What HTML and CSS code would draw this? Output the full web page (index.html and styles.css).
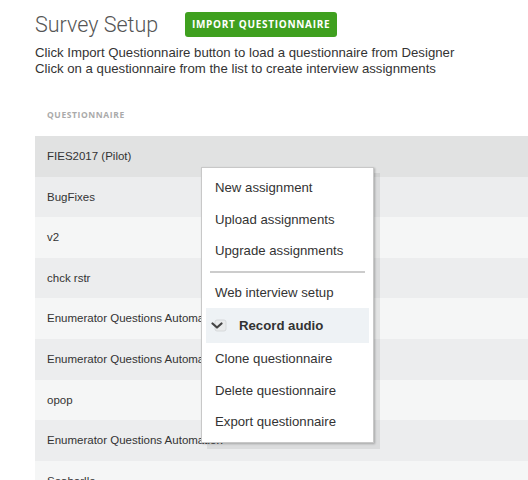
FILE: index.html
```html
<!DOCTYPE html>
<html>
<head>
<meta charset="utf-8">
<link rel="stylesheet" href="styles.css">
</head>
<body>
<div class="page">
  <div class="title-row">
    <h1 class="title">Survey Setup</h1>
    <button class="btn-import">IMPORT QUESTIONNAIRE</button>
  </div>
  <p class="desc">Click Import Questionnaire button to load a questionnaire from Designer<br>Click on a questionnaire from the list to create interview assignments</p>
  <div class="table">
    <div class="thead">QUESTIONNAIRE</div>
    <div class="row hover">FIES2017 (Pilot)</div>
    <div class="row">BugFixes</div>
    <div class="row">v2</div>
    <div class="row">chck rstr</div>
    <div class="row">Enumerator Questions Automation</div>
    <div class="row">Enumerator Questions Automation</div>
    <div class="row">opop</div>
    <div class="row">Enumerator Questions Automation</div>
    <div class="row">Seaborlle</div>
  </div>
  <ul class="menu">
    <li class="item">New assignment</li>
    <li class="item">Upload assignments</li>
    <li class="item">Upgrade assignments</li>
    <li class="divider"></li>
    <li class="item">Web interview setup</li>
    <li class="item check-item">
      <span class="checkbox"><svg width="16" height="14" viewBox="0 0 16 14"><rect x="4" y="1" width="11" height="11" rx="2" fill="#e9ebec" stroke="#d6d9db"/><path d="M1.5 4.5 L6 8.5 L10.5 4.5" fill="none" stroke="#444" stroke-width="2.2" stroke-linecap="round" stroke-linejoin="round"/></svg></span>
      <span class="check-label">Record audio</span>
    </li>
    <li class="item">Clone questionnaire</li>
    <li class="item">Delete questionnaire</li>
    <li class="item">Export questionnaire</li>
  </ul>
</div>
</body>
</html>
```
FILE: styles.css
```css
html, body {
  margin: 0;
  padding: 0;
  background: #fff;
}
body {
  font-family: "Liberation Sans", Arial, sans-serif;
  color: #333;
  overflow: hidden;
}
.page {
  position: relative;
  padding-left: 35px;
  padding-top: 10px;
}
.title-row {
  display: flex;
  align-items: center;
  gap: 27px;
  height: 30px;
}
.title {
  margin: 0;
  font-family: Roboto, "Liberation Sans", sans-serif;
  font-weight: 300;
  font-size: 21.5px;
  color: #555;
  line-height: 30px;
}
.btn-import {
  background: #3fa01f;
  color: #fff;
  border: 0;
  border-radius: 3px;
  height: 25px;
  width: 152px;
  padding: 0;
  font-family: "Open Sans", "DejaVu Sans", sans-serif;
  font-weight: 700;
  font-size: 10px;
  letter-spacing: 0.7px;
  margin-top: -2px;
}
.desc {
  margin: 5px 0 0;
  font-size: 13.2px;
  line-height: 16px;
  color: #333;
}
.table {
  margin-top: 28px;
}
.thead {
  padding-left: 12px;
  height: 31px;
  line-height: 20px;
  font-family: "Open Sans", "DejaVu Sans", sans-serif;
  font-weight: 700;
  font-size: 8.5px;
  letter-spacing: 0.6px;
  color: #aaa;
}
.row {
  height: 40.6px;
  line-height: 40px;
  padding-left: 12px;
  font-size: 11.5px;
  color: #333;
  background: #f5f6f6;
}
.row:nth-child(odd) {
  background: #ecedee;
}
.row.hover {
  background: #e1e2e2;
}
.menu {
  position: absolute;
  left: 201px;
  top: 167px;
  width: 171px;
  margin: 0;
  padding: 4px 0 4px;
  list-style: none;
  background: #fff;
  border: 1px solid #c8c8c8;
  box-shadow: 1px 1px 2px rgba(0,0,0,0.25), 6px 6px 0 rgba(0,0,0,0.07);
}
.item {
  height: 31.5px;
  line-height: 31.5px;
  padding-left: 13px;
  font-size: 13.2px;
  color: #333;
  white-space: nowrap;
}
.divider {
  height: 2px;
  background: #ccc;
  margin: 4px 8px 4px 8px;
}
.check-item {
  display: flex;
  align-items: center;
  height: 35px;
  margin: 0 4px 0 4px;
  padding-left: 5px;
  background: #eef2f5;
}
.checkbox {
  display: flex;
  width: 16px;
  height: 14px;
  margin-right: 12px;
  margin-top: 1px;
}
.check-label {
  font-weight: 700;
}
```
